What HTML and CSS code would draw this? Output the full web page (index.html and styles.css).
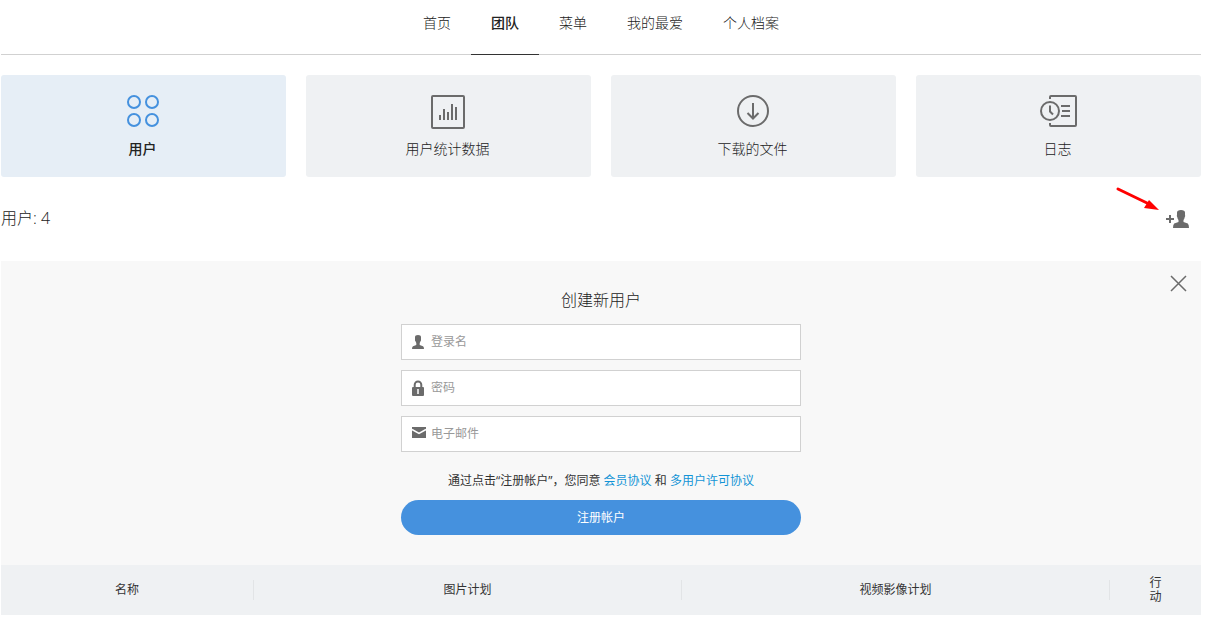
FILE: index.html
```html
<!DOCTYPE html>
<html lang="zh-CN">
<head>
<meta charset="utf-8">
<title>团队</title>
<link rel="stylesheet" href="styles.css">
</head>
<body>
<div class="page">
  <nav class="tabs">
    <a class="tab" href="#">首页</a>
    <a class="tab tab-active" href="#">团队</a>
    <a class="tab" href="#">菜单</a>
    <a class="tab" href="#">我的最爱</a>
    <a class="tab" href="#">个人档案</a>
  </nav>

  <main>
    <div class="cards">
      <a class="card card-active" href="#">
        <svg width="34" height="34" viewBox="0 0 34 34" fill="none" stroke="#4591de" stroke-width="2"><circle cx="8" cy="7" r="6"/><circle cx="26" cy="7" r="6"/><circle cx="8" cy="25" r="6"/><circle cx="26" cy="25" r="6"/></svg>
        <span>用户</span>
      </a>
      <a class="card" href="#">
        <svg width="34" height="34" viewBox="0 0 34 34" fill="none" stroke="#6b6b6b" stroke-width="2"><rect x="1" y="1" width="32" height="32" rx="1"/><path d="M9 25v-5M13 25V14M17 25v-8M21 25V9M25 25V12"/></svg>
        <span>用户统计数据</span>
      </a>
      <a class="card" href="#">
        <svg width="34" height="34" viewBox="0 0 34 34" fill="none" stroke="#6b6b6b" stroke-width="2"><circle cx="17" cy="16" r="15"/><path d="M17 8v15M11.500 18l5.500 5.500 5.500-5.500"/></svg>
        <span>下载的文件</span>
      </a>
      <a class="card" href="#">
        <svg width="38" height="34" viewBox="0 0 38 34" fill="none" stroke="#6b6b6b" stroke-width="2"><circle cx="11" cy="16" r="9"/><path d="M11 10.500v6l3 3M11 4V2q0-1 1-1h24q1 0 1 1v28q0 1-1 1H12q-1 0-1-1v-2M22 11h9M23 16h8M22 21h9"/></svg>
        <span>日志</span>
      </a>
    </div>

    <div class="summary">
      <h1 class="count">用户: 4</h1>
      <button class="icon-button" type="button" aria-label="添加用户">
        <svg width="24" height="20" viewBox="0 0 24 20"><path d="M1 10h8M5 6v8" stroke="#6b6b6b" stroke-width="2"/><path d="M16 1q4 0 4 2.500V6q.6 1-.3 2.300-.2 1.700-1.200 2.700v2l4.300 1.500Q24 15.500 24 19H8q0-3.500 1.200-4.500l4.300-1.500v-2q-1-1-1.200-2.700Q11.400 7 12 6V3.500Q12 1 16 1z" fill="#6b6b6b"/></svg>
      </button>
      <svg class="pointer" width="46" height="26" viewBox="0 0 46 26"><path d="M3 3l29 14" stroke="#f00" stroke-width="3" stroke-linecap="round"/><path d="M44 24l-15-2 5-8z" fill="#f00"/></svg>
    </div>

    <section class="panel">
      <button class="close" type="button" aria-label="关闭">
        <svg width="17" height="17" viewBox="0 0 17 17"><path d="M1 1l15 15M16 1L1 16" stroke="#6b6b6b" stroke-width="1.500"/></svg>
      </button>
      <form class="form">
        <h2 class="form-title">创建新用户</h2>
        <label class="field">
          <svg width="14" height="16" viewBox="0 0 14 16"><path d="M7 1q3 0 3 2v2.500q.3 1-.6 2L8.700 9v2l3.300 1.200q1 .6 1 2.800H1q0-2.200 1-2.800L5.300 11V9l-.7-1.500q-.9-1-.6-2V3q0-2 3-2z" fill="#6b6b6b"/></svg>
          <input class="input" type="text" placeholder="登录名" aria-label="登录名">
        </label>
        <label class="field">
          <svg width="14" height="16" viewBox="0 0 14 16"><path d="M3.700 8V4.700a3.300 3.300 0 0 1 6.600 0V8" fill="none" stroke="#6b6b6b" stroke-width="2"/><rect x="1" y="7" width="12" height="9" rx="1" fill="#6b6b6b"/><path d="M7 9v5" stroke="#fff" stroke-width="1.500"/></svg>
          <input class="input" type="password" placeholder="密码" aria-label="密码">
        </label>
        <label class="field">
          <svg width="14" height="16" viewBox="0 0 14 16"><g transform="translate(1 0)"><rect y="1" width="14" height="11" fill="#6b6b6b"/><path d="M0 3.500l7 4 7-4" fill="none" stroke="#fff" stroke-width="1.500"/></g></svg>
          <input class="input" type="email" placeholder="电子邮件" aria-label="电子邮件">
        </label>
        <p class="terms">通过点击“注册帐户”，您同意 <a href="#">会员协议</a> 和 <a href="#">多用户许可协议</a></p>
        <button class="submit" type="submit">注册帐户</button>
      </form>
    </section>

    <table class="users">
      <thead>
        <tr>
          <th class="col-name"><div class="head">名称</div></th>
          <th class="col-plan"><div class="head">图片计划</div></th>
          <th class="col-plan"><div class="head">视频影像计划</div></th>
          <th class="col-action">行动</th>
        </tr>
      </thead>
    </table>
  </main>
</div>
</body>
</html>
```
FILE: styles.css
```css
* {
  box-sizing: border-box;
}

body {
  margin: 0;
  background: #fff;
  color: #222;
  font-family: "Open Sans", "Noto Sans CJK SC", sans-serif;
  font-size: 14px;
  font-weight: 300;
  line-height: 20px;
}

svg {
  display: block;
  flex: none;
  overflow: visible;
}

button {
  border: 0;
  padding: 0;
  background: none;
  font: inherit;
  cursor: pointer;
}

.page {
  padding: 0 10px 8px 1px;
}

.tabs {
  display: flex;
  justify-content: center;
  border-bottom: 1px solid #d1d1d1;
}

.tab {
  margin-bottom: -1px;
  padding: 13px 20px 21px;
  border-bottom: 1px solid transparent;
  color: #222;
  text-decoration: none;
}

.tab-active {
  border-bottom-color: #333;
  font-weight: 500;
}

.cards {
  display: grid;
  grid-template-columns: repeat(4, 1fr);
  gap: 20px;
  margin-top: 20px;
}

.card {
  display: flex;
  flex-direction: column;
  align-items: center;
  gap: 10px;
  padding: 20px 2px 18px 0;
  border-radius: 3px;
  background: #eff1f3;
  color: #222;
  text-decoration: none;
}

.card-active {
  background: #e6eef6;
  font-weight: 500;
}

.summary {
  position: relative;
  display: flex;
  align-items: center;
  justify-content: space-between;
  height: 84px;
  padding-right: 12px;
}

.count,
.form-title {
  margin: 0;
  font-size: 16px;
  font-weight: inherit;
  line-height: 24px;
}

.count {
  padding-bottom: 2px;
}

.pointer {
  position: absolute;
  top: 9px;
  right: 40px;
}

.panel {
  position: relative;
  padding: 27px 0 30px;
  background: #f8f8f8;
}

.close {
  position: absolute;
  top: 14px;
  right: 14px;
}

.form {
  display: flex;
  flex-direction: column;
  gap: 10px;
  width: 400px;
  max-width: 100%;
  margin: 0 auto;
}

.form-title {
  margin-bottom: 2px;
  text-align: center;
}

.field {
  display: flex;
  align-items: center;
  gap: 6px;
  height: 36px;
  padding: 0 9px;
  border: 1px solid #d1d1d1;
  background: #fff;
}

.input {
  flex: 1;
  min-width: 0;
  padding: 0;
  border: 0;
  outline: 0;
  background: none;
  color: #333;
  font: inherit;
  font-size: 12px;
  font-weight: 400;
}

.input::placeholder {
  color: #999;
}

.terms {
  margin: 10px 0 0;
  color: #333;
  font-size: 12px;
  font-weight: 400;
  line-height: 18px;
  text-align: center;
}

.terms a {
  color: #1394d6;
  text-decoration: none;
}

.submit {
  height: 35px;
  border-radius: 18px;
  background: #4591de;
  color: #fff;
  font-size: 12px;
  font-weight: 400;
}

.users {
  width: 100%;
  border-collapse: collapse;
  table-layout: fixed;
  background: #eff1f3;
  color: #333;
  font-size: 12px;
}

.users th {
  height: 50px;
  padding: 0;
  font-weight: 400;
  text-align: center;
}

.head {
  border-right: 1px solid #e2e4e6;
}

.col-name {
  width: 21.1%;
}

.col-plan {
  width: 35.65%;
}

.users .col-action {
  padding: 0 36px;
  line-height: 14px;
}
```
